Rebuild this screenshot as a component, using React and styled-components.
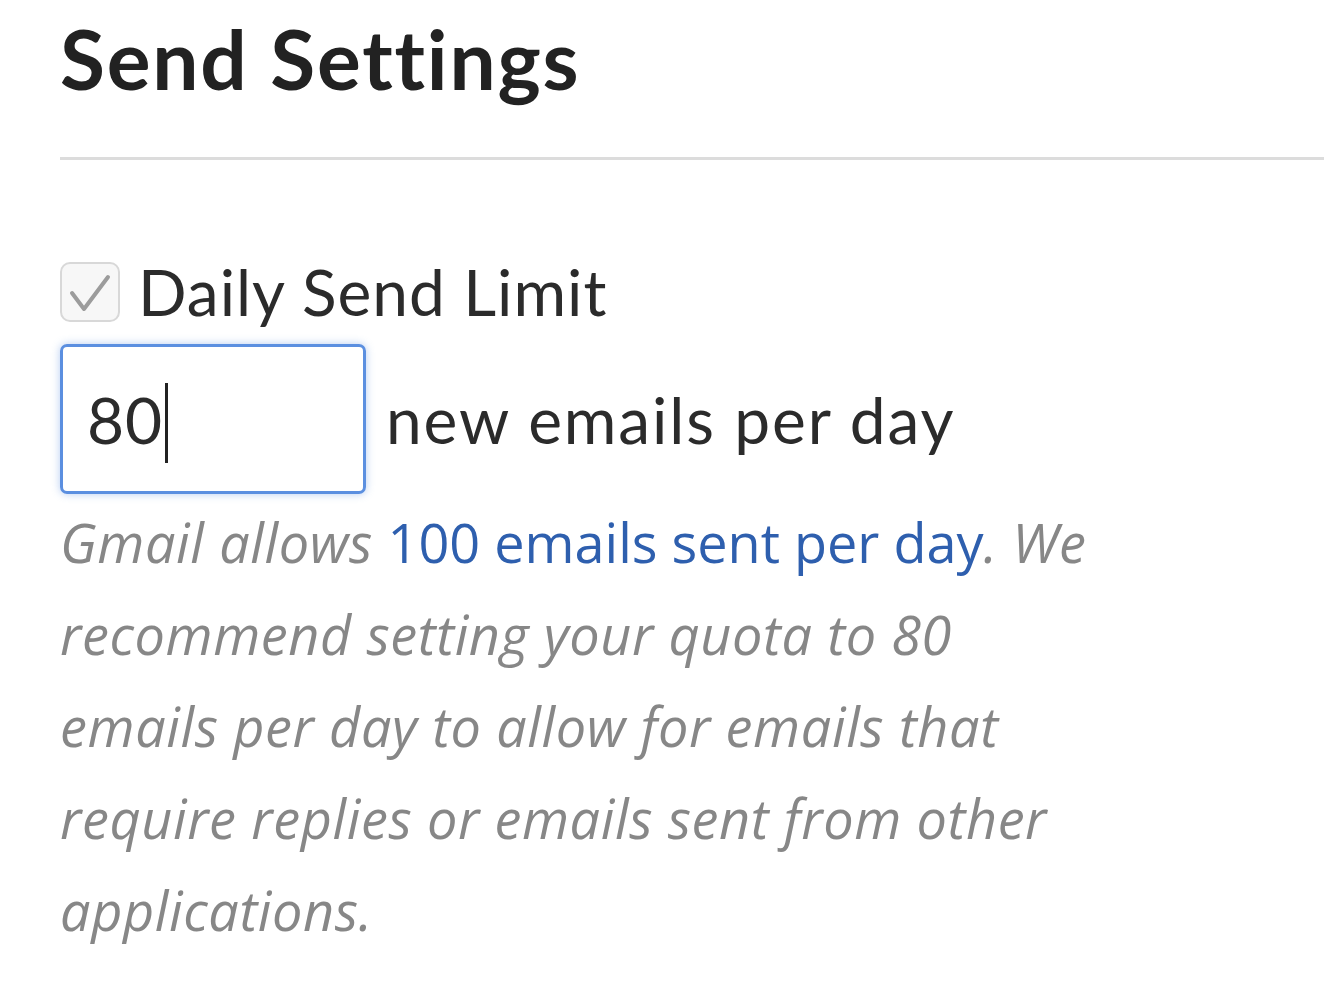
import React from "react";
import styled, { createGlobalStyle } from "styled-components";

const GlobalStyle = createGlobalStyle`
  html, body {
    margin: 0;
    padding: 0;
    background: #ffffff;
  }
  body {
    font-family: Lato, "Open Sans", Arial, sans-serif;
    color: #2b2b2b;
  }
`;

export default function App() {
  return (
    <Page>
      <GlobalStyle />
      <Header>
        <Title>Send Settings</Title>
      </Header>
      <Divider />
      <Section>
        <CheckRow>
          <CheckBox>
            <svg width="56" height="56" viewBox="0 0 56 56">
              <path d="M10 29 L22 45 L46 13" fill="none" stroke="#9c9c9c" strokeWidth="4" strokeLinecap="round" strokeLinejoin="round" />
            </svg>
          </CheckBox>
          <Label>Daily Send Limit</Label>
        </CheckRow>
        <InputRow>
          <LimitInput>
            80<Caret />
          </LimitInput>
          <Unit>new emails per day</Unit>
        </InputRow>
        <Help>
          Gmail allows <HelpLink>100 emails sent per day</HelpLink>. We
          <br />
          recommend setting your quota to 80
          <br />
          emails per day to allow for emails that
          <br />
          require replies or emails sent from other
          <br />
          applications.
        </Help>
      </Section>
    </Page>
  );
}

const Page = styled.div`
  width: 1324px;
  height: 990px;
  overflow: hidden;
  padding-left: 60px;
  box-sizing: border-box;
`;

const Header = styled.div`
  height: 157px;
  display: flex;
  align-items: flex-start;
`;

const Title = styled.h1`
  margin: 0;
  padding-top: 8px;
  font-size: 82px;
  line-height: 100px;
  font-weight: 700;
  color: #222;
  letter-spacing: 1.8px;
`;

const Divider = styled.div`
  height: 3px;
  background: #dcdcdc;
`;

const Section = styled.div`
  padding-top: 100px;
  display: flex;
  flex-direction: column;
`;

const CheckRow = styled.div`
  display: flex;
  align-items: center;
  gap: 18px;
  height: 64px;
`;

const CheckBox = styled.div`
  width: 56px;
  height: 56px;
  border: 2px solid #d8d8d8;
  border-radius: 10px;
  background: #f7f7f7;
  display: flex;
  align-items: center;
  justify-content: center;
`;

const Label = styled.span`
  font-size: 64px;
  line-height: 64px;
  color: #2b2b2b;
  letter-spacing: 1px;
`;

const InputRow = styled.div`
  margin-top: 20px;
  display: flex;
  align-items: center;
  gap: 20px;
`;

const LimitInput = styled.div`
  width: 306px;
  height: 150px;
  box-sizing: border-box;
  border: 3px solid #5b8fe0;
  border-radius: 7px;
  box-shadow: 0 0 8px rgba(91, 143, 224, 0.45);
  display: flex;
  align-items: center;
  padding-left: 24px;
  font-size: 64px;
  color: #2b2b2b;
  letter-spacing: 1px;
`;

const Caret = styled.span`
  display: inline-block;
  width: 3px;
  height: 80px;
  background: #222;
  margin-left: 2px;
  margin-top: 8px;
`;

const Unit = styled.span`
  font-size: 64px;
  color: #2b2b2b;
  letter-spacing: 1.9px;
`;

const Help = styled.p`
  margin: 2px 0 0;
  font-family: "Open Sans", Lato, Arial, sans-serif;
  font-size: 54px;
  line-height: 92px;
  font-style: italic;
  color: #878787;
  letter-spacing: 0.6px;
  white-space: nowrap;
`;

const HelpLink = styled.a`
  font-style: normal;
  color: #2e5fae;
  text-decoration: none;
  letter-spacing: 0;
`;
